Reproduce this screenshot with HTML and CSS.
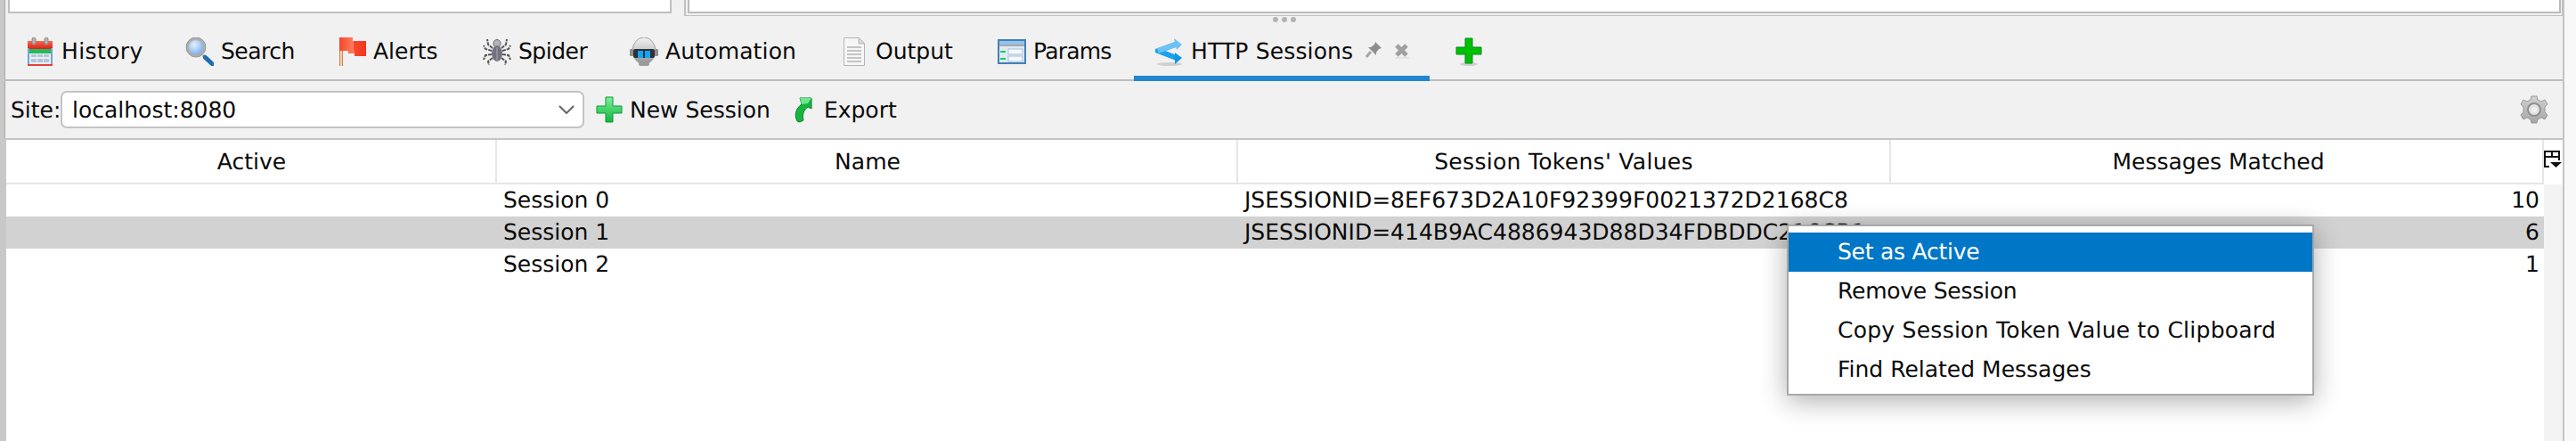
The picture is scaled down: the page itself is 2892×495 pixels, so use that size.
FILE: index.html
```html
<!DOCTYPE html>
<html lang="en">
<head>
<meta charset="utf-8">
<title>HTTP Sessions</title>
<link rel="stylesheet" href="styles.css">
</head>
<body>
<div class="window">
  <div class="top-panels">
    <div class="panel-left"></div>
    <div class="panel-right"><div class="panel-right-inner"></div></div>
  </div>
  <div class="grip"><i></i><i></i><i></i></div>
  <nav class="tabs">
    <div class="tab">
      <svg class="ico" viewBox="0 0 32 32"><defs><linearGradient id="calr" x1="0" y1="0" x2="0" y2="1"><stop offset="0" stop-color="#f96a4e"/><stop offset="1" stop-color="#d9201a"/></linearGradient></defs><rect x="3" y="5" width="26" height="27" fill="#e9eef4"/><rect x="3" y="4" width="28" height="9" fill="url(#calr)" transform="translate(-1 0)"/><rect x="7" y="0" width="4" height="8" rx="2" fill="#b9b4b0" stroke="#8a8a8a"/><rect x="21" y="0" width="4" height="8" rx="2" fill="#b9b4b0" stroke="#8a8a8a"/><rect x="4" y="13" width="24" height="5" fill="#27b85c"/><g fill="#b5c6d8"><rect x="6" y="19" width="6" height="3"/><rect x="13" y="19" width="6" height="3"/><rect x="20" y="19" width="6" height="3"/><rect x="6" y="24" width="6" height="4"/><rect x="13" y="24" width="6" height="4"/><rect x="20" y="24" width="6" height="4"/></g><rect x="2" y="12" width="2" height="18" fill="#6fa5d6"/><rect x="28" y="12" width="2" height="18" fill="#6fa5d6"/><rect x="2" y="30" width="28" height="2" fill="#e2423a"/></svg>
      <span class="ls-a">History</span>
    </div>
    <div class="tab">
      <svg class="ico" viewBox="0 0 32 32"><defs><radialGradient id="lens" cx=".4" cy=".35" r=".7"><stop offset="0" stop-color="#e4f1ff"/><stop offset="1" stop-color="#6da6ee"/></radialGradient></defs><path d="M20 20 L30 30" stroke="#8a8a8a" stroke-width="3"/><path d="M22.500 22.500 L30.500 30" stroke="#1f6db4" stroke-width="5" stroke-linecap="round"/><circle cx="12" cy="11" r="9.500" fill="url(#lens)" stroke="#aeaeae" stroke-width="3"/><circle cx="12" cy="11" r="11" fill="none" stroke="#8d8d8d" stroke-width=".8"/></svg>
      <span class="ls-b">Search</span>
    </div>
    <div class="tab">
      <svg class="ico" viewBox="0 0 32 32"><defs><linearGradient id="flag" x1="0" y1="0" x2="1" y2="0"><stop offset="0" stop-color="#f4452a"/><stop offset=".5" stop-color="#ff7a5c"/><stop offset="1" stop-color="#ee2a14"/></linearGradient></defs><rect x="2" y="14" width="4" height="18" fill="#c8824a"/><rect x="3" y="14" width="2" height="18" fill="#f0d2b0"/><path d="M2 0 H17 V4 H32 V21 H19 V18 H12 V15 H2 Z" fill="url(#flag)"/><path d="M18 4 H32 V21 H19 V15 H18 Z" fill="#f23a20" opacity=".7"/></svg>
      <span>Alerts</span>
    </div>
    <div class="tab">
      <svg class="ico" viewBox="0 0 32 32" fill="none"><g stroke="#55555a" stroke-width="2" stroke-dasharray="4 1"><path d="M11 12 L6 8 L5 2"/><path d="M21 12 L26 8 L27 2"/><path d="M10 15 L3 13 L1 9"/><path d="M22 15 L29 13 L31 9"/><path d="M10 19 L3 20 L1 25"/><path d="M22 19 L29 20 L31 25"/><path d="M11 23 L6 27 L7 31"/><path d="M21 23 L26 27 L25 31"/></g><ellipse cx="16" cy="7" rx="4" ry="4.500" fill="#b4b4ba" stroke="#66666c"/><ellipse cx="16" cy="18" rx="6" ry="9" fill="#73737f"/><path d="M16 11 V26" stroke="#8c8c98" stroke-width="2"/></svg>
      <span class="ls-b">Spider</span>
    </div>
    <div class="tab">
      <svg class="ico" viewBox="0 0 32 32"><defs><linearGradient id="robo" x1="0" y1="0" x2="0" y2="1"><stop offset="0" stop-color="#f4f4f4"/><stop offset=".5" stop-color="#c7c7c7"/><stop offset="1" stop-color="#8f8f8f"/></linearGradient></defs><ellipse cx="16" cy="15" rx="13" ry="15" fill="url(#robo)" stroke="#a7a7a7"/><rect x="0" y="13" width="4" height="8" rx="1" fill="#8d8d8d"/><rect x="28" y="13" width="4" height="8" rx="1" fill="#8d8d8d"/><rect x="4" y="13" width="24" height="10" rx="2" fill="#2c3038"/><rect x="9" y="15" width="6" height="8" fill="#12a4f0"/><rect x="17" y="15" width="6" height="8" fill="#12a4f0"/><rect x="10" y="26" width="12" height="6" rx="2" fill="#9b9b9b"/></svg>
      <span class="ls-c">Automation</span>
    </div>
    <div class="tab">
      <svg class="ico" viewBox="0 0 32 32"><path d="M4.500 .5 H21 L27.500 7 V31.500 H4.500 Z" fill="#f6f6f6" stroke="#b4b4b4"/><path d="M21 .5 V7 H27.500 Z" fill="#dcdcdc" stroke="#b4b4b4"/><g fill="#c4c4c4"><rect x="8" y="10" width="16" height="2"/><rect x="8" y="14" width="16" height="2"/><rect x="8" y="18" width="16" height="2"/><rect x="8" y="22" width="16" height="2"/><rect x="8" y="26" width="16" height="2"/></g></svg>
      <span>Output</span>
    </div>
    <div class="tab">
      <svg class="ico" viewBox="0 0 32 32"><rect x="1" y="3" width="30" height="26" fill="#dfeaf6" stroke="#4180b8" stroke-width="2"/><rect x="2" y="4" width="28" height="4" fill="#92c3ee"/><rect x="2" y="8" width="28" height="2" fill="#a8a8a8"/><rect x="3" y="15" width="6" height="2" fill="#1fd04a"/><rect x="3" y="23" width="6" height="2" fill="#1fd04a"/><rect x="12" y="13" width="16" height="6" fill="#f4f8fc" stroke="#a8bfd6"/><rect x="12" y="21" width="16" height="6" fill="#f4f8fc" stroke="#a8bfd6"/></svg>
      <span class="ls-d">Params</span>
    </div>
    <div class="tab active">
      <svg class="ico" viewBox="0 0 32 32" fill="none"><ellipse cx="16" cy="30" rx="14" ry="2" fill="#d0d0d0"/><path d="M25 23.500 L3 15 L24 7.500" stroke="#18a2ee" stroke-width="6"/><path d="M24 7.500 L3 15" stroke="#6cc2f5" stroke-width="6"/><path d="M21 1 L30 8 L24 14 Z" fill="#6cc2f5"/><path d="M22 17 L30 23 L22 30 Z" fill="#0f96e6"/></svg>
      <span class="ls-c">HTTP Sessions</span>
      <svg class="pin" viewBox="0 0 18 18"><path d="M11 0 L18 7 L15 8 L12 12 L12 15 L3 6 L6 6 L10 3 Z" fill="#8e8e8e"/><path d="M6 11 L1 17" stroke="#a8a8a8" stroke-width="3"/></svg>
      <svg class="close" viewBox="0 0 18 18"><path d="M3 3 L14 14 M14 3 L3 14" stroke="#a0a0a0" stroke-width="5"/><rect x="1" y="16" width="16" height="2" fill="#e4e4e4"/></svg>
    </div>
    <div class="tab-add">
      <svg class="ico" viewBox="0 0 32 32"><ellipse cx="16" cy="30" rx="10" ry="2" fill="#cfcfcf"/><path d="M12 1 H20 V11 H30 V19 H20 V29 H12 V19 H2 V11 H12 Z" fill="#00c000" stroke="#058a1c"/></svg>
    </div>
  </nav>
  <div class="toolbar">
    <span class="site-label">Site:</span>
    <div class="combo">
      <span>localhost:8080</span>
      <svg class="chevron" viewBox="0 0 18 10"><path d="M1 1 L9 9 L17 1" fill="none" stroke="#666" stroke-width="2"/></svg>
    </div>
    <div class="tool new-session">
      <svg class="ico" viewBox="0 0 32 32"><defs><linearGradient id="plusg" x1="0" y1="0" x2="0" y2="1"><stop offset="0" stop-color="#7df09a"/><stop offset="1" stop-color="#0fb53e"/></linearGradient></defs><path d="M12 2 H20 V12 H30 V20 H20 V30 H12 V20 H2 V12 H12 Z" fill="url(#plusg)" stroke="#0a9a32"/></svg>
      <span>New Session</span>
    </div>
    <div class="tool export">
      <svg class="ico" viewBox="0 0 32 32"><path d="M12 29 C8 22 11 14 17 10 L15 3 H28 V15 L24 13 C20 16 17 21 19 28 L15 30 Z" fill="#14b53f" stroke="#0a7f2a"/><path d="M17 10 L15 3 H28 L24 9 Z" fill="#6fe58c"/></svg>
      <span>Export</span>
    </div>
    <svg class="gear" viewBox="0 0 32 32"><defs><linearGradient id="gearg" x1="0" y1="0" x2="0" y2="1"><stop offset="0" stop-color="#d2d2d2"/><stop offset="1" stop-color="#a6a6a6"/></linearGradient></defs><path d="M13 1 H19 L20 5 L24 7 L28 5 L31 10 L28 13 V19 L31 22 L28 27 L24 25 L20 27 L19 31 H13 L12 27 L8 25 L4 27 L1 22 L4 19 V13 L1 10 L4 5 L8 7 L12 5 Z" fill="url(#gearg)" stroke="#979797"/><circle cx="16" cy="16" r="7" fill="#e2e2e2" stroke="#8f8f8f" stroke-width="2"/><circle cx="16" cy="16" r="3" fill="#f1f1f1"/></svg>
  </div>
  <div class="table">
    <div class="thead">
      <div class="th th-active">Active</div>
      <div class="th th-name">Name</div>
      <div class="th ls-e">Session Tokens' Values</div>
      <div class="th th-matched">Messages Matched</div>
      <div class="corner">
        <svg class="corner-ico" viewBox="0 0 20 20"><path d="M1 7 V1 H17 V7 M1 7 H17 M9 1 V7 M1 7 V18 H6 M17 7 V11" fill="none" stroke="#111" stroke-width="2"/><path d="M7 13 H20 L13.500 19 Z" fill="#111"/></svg>
      </div>
    </div>
    <div class="tbody">
      <div class="rows">
        <div class="row"><div></div><div>Session 0</div><div>JSESSIONID=8EF673D2A10F92399F0021372D2168C8</div><div class="num">10</div></div>
        <div class="row selected"><div></div><div>Session 1</div><div>JSESSIONID=414B9AC4886943D88D34FDBDDC216CB1</div><div class="num">6</div></div>
        <div class="row"><div></div><div>Session 2</div><div></div><div class="num">1</div></div>
      </div>
      <div class="strip"></div>
    </div>
  </div>
</div>
<ul class="menu">
  <li class="on ls-f">Set as Active</li>
  <li class="ls-f">Remove Session</li>
  <li class="ls-g">Copy Session Token Value to Clipboard</li>
  <li>Find Related Messages</li>
</ul>
</body>
</html>
```
FILE: styles.css
```css
* { box-sizing: border-box; }
html, body { margin: 0; padding: 0; }
body {
  width: 2892px;
  height: 495px;
  overflow: hidden;
  position: relative;
  background: #f8f8f8;
  font-family: "DejaVu Sans", sans-serif;
  font-size: 25px;
  color: #0a0a0a;
  text-rendering: geometricPrecision;
}
.window {
  width: 2879px;
  height: 495px;
  display: flex;
  flex-direction: column;
  background: #f1f1f1;
  border-left: 5px solid #c8c8c8;
  border-right: 2px solid #c4c4c4;
  box-shadow: inset 1px 0 0 #a8a8a8;
}
.top-panels { display: flex; height: 18px; flex: none; }
.panel-left {
  margin-left: 4px;
  width: 746px;
  height: 15px;
  background: #fff;
  border: solid #c0c0c0;
  border-width: 0 2px 2px 2px;
}
.panel-right {
  margin-left: 14px;
  width: 2110px;
  height: 18px;
  border: solid #c0c0c0;
  border-width: 0 1px 1px 2px;
  padding-left: 2px;
  padding-right: 1px;
}
.panel-right-inner {
  height: 15px;
  background: #fff;
  border: solid #bcbcbc;
  border-width: 0 2px 2px 2px;
}
.grip {
  height: 8px;
  flex: none;
  display: flex;
  justify-content: flex-start;
  align-items: center;
  gap: 4px;
  padding-left: 1424px;
}
.grip i { width: 6px; height: 6px; border-radius: 50%; background: #b4b4b4; }
.tabs {
  height: 65px;
  flex: none;
  display: grid;
  grid-template-columns: 179px 171px 163px 165px 236px 177px 177px 332px 1fr;
  border-bottom: 2px solid #bdbdbd;
}
.tab {
  height: 65px;
  padding: 0 0 2px 24px;
  display: flex;
  align-items: center;
  gap: 8px;
  white-space: nowrap;
}
.tab.active { box-shadow: inset 0 -6px 0 #2185d0; }
.tab-add { height: 63px; padding-left: 28px; display: flex; align-items: center; }
.ico { width: 32px; height: 32px; flex: none; display: block; }
.pin { width: 18px; height: 18px; margin-left: 6px; margin-bottom: 4px; }
.close { width: 18px; height: 18px; margin-left: 6px; margin-bottom: 2px; }
.toolbar {
  height: 66px;
  flex: none;
  display: flex;
  align-items: center;
  padding-left: 7px;
  padding-right: 16px;
  border-bottom: 2px solid #c4c4c4;
}
.site-label { width: 56px; flex: none; }
.combo {
  width: 588px;
  height: 42px;
  flex: none;
  background: #fff;
  border: 2px solid #c4c4c4;
  border-radius: 7px;
  padding: 0 9px 0 11px;
  display: flex;
  align-items: center;
  justify-content: space-between;
}
.chevron { width: 18px; height: 10px; }
.tool { display: flex; align-items: center; gap: 7px; white-space: nowrap; }
.new-session { margin-left: 12px; }
.export { margin-left: 18px; gap: 10px; }
.gear { width: 32px; height: 32px; margin-left: auto; }
.table {
  flex: 1;
  display: flex;
  flex-direction: column;
  background: #fff;
  border-left: 2px solid #c8c8c8;
  min-height: 0;
}
.thead {
  height: 50px;
  flex: none;
  display: grid;
  grid-template-columns: 551px 832px 733px 733px 21px;
}
.th {
  display: flex;
  align-items: center;
  justify-content: center;
  border-right: 2px solid #e6e6e6;
  border-bottom: 2px solid #e6e6e6;
}
.th-active { padding-left: 2px; }
.th-name { padding-left: 2px; }
.th-matched { padding-left: 4px; }
.corner { display: flex; align-items: flex-start; padding-top: 12px; }
.corner-ico { width: 20px; height: 20px; display: block; }
.tbody { flex: 1; display: flex; min-height: 0; }
.rows { width: 2849px; flex: none; }
.strip { flex: 1; background: #f3f3f3; }
.row {
  height: 36px;
  display: grid;
  grid-template-columns: 551px 832px 733px 733px;
  align-items: center;
  white-space: nowrap;
}
.row > div { padding-left: 7px; line-height: 36px; height: 36px; }
.row > .num { padding: 0 5px 0 0; text-align: right; }
.row.selected { background: #d2d2d2; }
.menu {
  position: absolute;
  left: 2006px;
  top: 252px;
  width: 592px;
  height: 192px;
  margin: 0;
  padding: 7px 0 0;
  list-style: none;
  background: #fff;
  border: 2px solid #a8a8a8;
  box-shadow: 0 6px 28px rgba(0, 0, 0, .32);
}
.menu li {
  height: 44px;
  line-height: 43px;
  padding-left: 55px;
  white-space: nowrap;
}
.menu li.on { background: #0076c6; color: #fff; }
.ls-a { letter-spacing: .4px; }
.ls-b { letter-spacing: -.5px; }
.ls-c { letter-spacing: .15px; }
.ls-d { letter-spacing: -.8px; }
.ls-e { letter-spacing: .3px; }
.ls-f { letter-spacing: -.25px; }
.ls-g { letter-spacing: .25px; }
```
